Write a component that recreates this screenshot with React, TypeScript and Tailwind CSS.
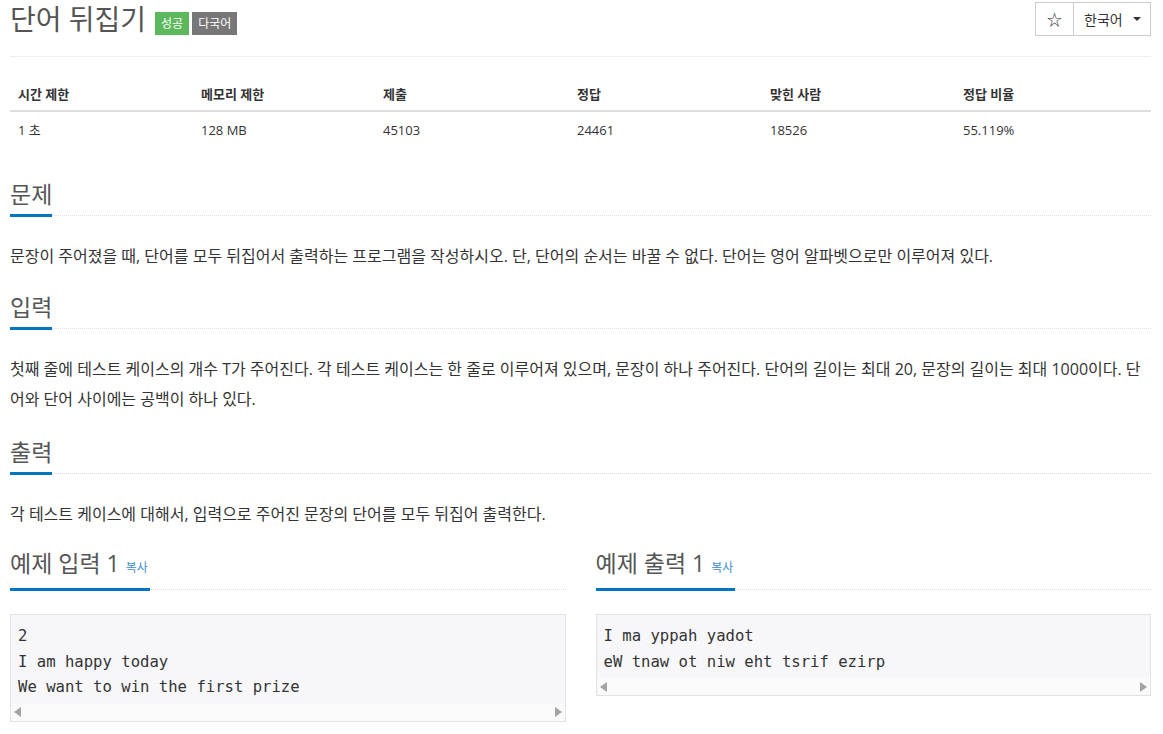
import React from "react";

const font = { fontFamily: '"Open Sans", "Noto Sans CJK KR", sans-serif' };

const stats = [
  ["시간 제한", "1 초"],
  ["메모리 제한", "128 MB"],
  ["제출", "45103"],
  ["정답", "24461"],
  ["맞힌 사람", "18526"],
  ["정답 비율", "55.119%"],
];

const SectionTitle = ({ children, className }: { children: React.ReactNode; className: string }) => (
  <div className={"border-b border-dotted border-[#ddd] " + className}>
    <h2 className="inline-block text-[23px] leading-[26px] text-[#555] pb-[7px] mb-[-2px] border-b-[3px] border-[#0076c0]">
      {children}
    </h2>
  </div>
);

const Scrollbar = () => (
  <div className="flex items-center justify-between h-[17px] bg-[#fafafa] px-[3px]">
    <span className="w-0 h-0 border-y-[5px] border-y-transparent border-r-[7px] border-r-[#a3a3a3]" />
    <span className="w-0 h-0 border-y-[5px] border-y-transparent border-l-[7px] border-l-[#a3a3a3]" />
  </div>
);

const Sample = ({ title, lines }: { title: string; lines: string[] }) => (
  <div>
    <div className="border-b border-dotted border-[#ddd]">
      <h2 className="inline-block text-[23px] leading-[26px] text-[#555] pb-[7px] mb-[-2px] border-b-[3px] border-[#0076c0] pr-[2px]">
        {title} <span className="text-[12px] text-[#428bca]">복사</span>
      </h2>
    </div>
    <div className="mt-[24px] border border-[#e1e1e8] bg-[#f7f7f9]">
      <pre
        className="px-[7px] pt-[9px] pb-[3px] text-[15.6px] leading-[25.5px] text-[#333]"
        style={{ fontFamily: '"DejaVu Sans Mono", monospace' }}
      >
        {lines.join("\n")}
      </pre>
      <Scrollbar />
    </div>
  </div>
);

export default function App() {
  return (
    <div className="w-[1163px] min-h-[734px] bg-white pl-[10px] pr-[12px] text-[#333]" style={font}>
      {/* header */}
      <div className="flex justify-between items-start border-b border-[#eee] h-[57px]">
        <div className="flex items-center pt-[3px]">
          <h1 className="text-[28px] leading-[33px] text-[#555]">단어 뒤집기</h1>
          <span className="ml-[9px] mt-[7px] bg-[#5cb85c] text-white text-[12px] leading-[23px] px-[6px]">성공</span>
          <span className="ml-[3px] mt-[7px] bg-[#777] text-white text-[12px] leading-[23px] px-[6px]">다국어</span>
        </div>
        <div className="flex mt-[2px] border border-[#ccc] h-[34px] text-[14px]">
          <div className="w-[38px] flex items-center justify-center border-r border-[#ccc] text-[15px]">☆</div>
          <div className="w-[76px] flex items-center pl-[10px] gap-[10px]">
            <span>한국어</span>
            <span className="w-0 h-0 border-x-[4px] border-x-transparent border-t-[4px] border-t-[#333]" />
          </div>
        </div>
      </div>

      {/* stats table */}
      <div className="mt-[19px] grid grid-cols-[183px_182px_194px_193px_193px_1fr] text-[13px]">
        {stats.map(([h]) => (
          <div key={h} className="px-[8px] pt-[8px] pb-[6px] leading-[20px] font-bold border-b-2 border-[#ddd]">
            {h}
          </div>
        ))}
        {stats.map(([h, v]) => (
          <div key={h} className="px-[8px] py-[8px] leading-[20px]">
            {v}
          </div>
        ))}
      </div>

      <SectionTitle className="mt-[33px]">문제</SectionTitle>
      <p className="mt-[25px] text-[16px] leading-[30px]">
        문장이 주어졌을 때, 단어를 모두 뒤집어서 출력하는 프로그램을 작성하시오. 단, 단어의 순서는 바꿀 수 없다. 단어는 영어 알파벳으로만 이루어져 있다.
      </p>

      <SectionTitle className="mt-[23px]">입력</SectionTitle>
      <p className="mt-[25px] text-[16px] leading-[30px]">
        첫째 줄에 테스트 케이스의 개수 T가 주어진다. 각 테스트 케이스는 한 줄로 이루어져 있으며, 문장이 하나 주어진다. 단어의 길이는 최대 20, 문장의 길이는 최대 1000이다. 단어와 단어 사이에는 공백이 하나 있다.
      </p>

      <SectionTitle className="mt-[25px]">출력</SectionTitle>
      <p className="mt-[25px] text-[16px] leading-[30px]">
        각 테스트 케이스에 대해서, 입력으로 주어진 문장의 단어를 모두 뒤집어 출력한다.
      </p>

      <div className="mt-[21px] grid grid-cols-2 gap-[30px] items-start">
        <Sample title="예제 입력 1" lines={["2", "I am happy today", "We want to win the first prize"]} />
        <Sample title="예제 출력 1" lines={["I ma yppah yadot", "eW tnaw ot niw eht tsrif ezirp"]} />
      </div>
    </div>
  );
}
